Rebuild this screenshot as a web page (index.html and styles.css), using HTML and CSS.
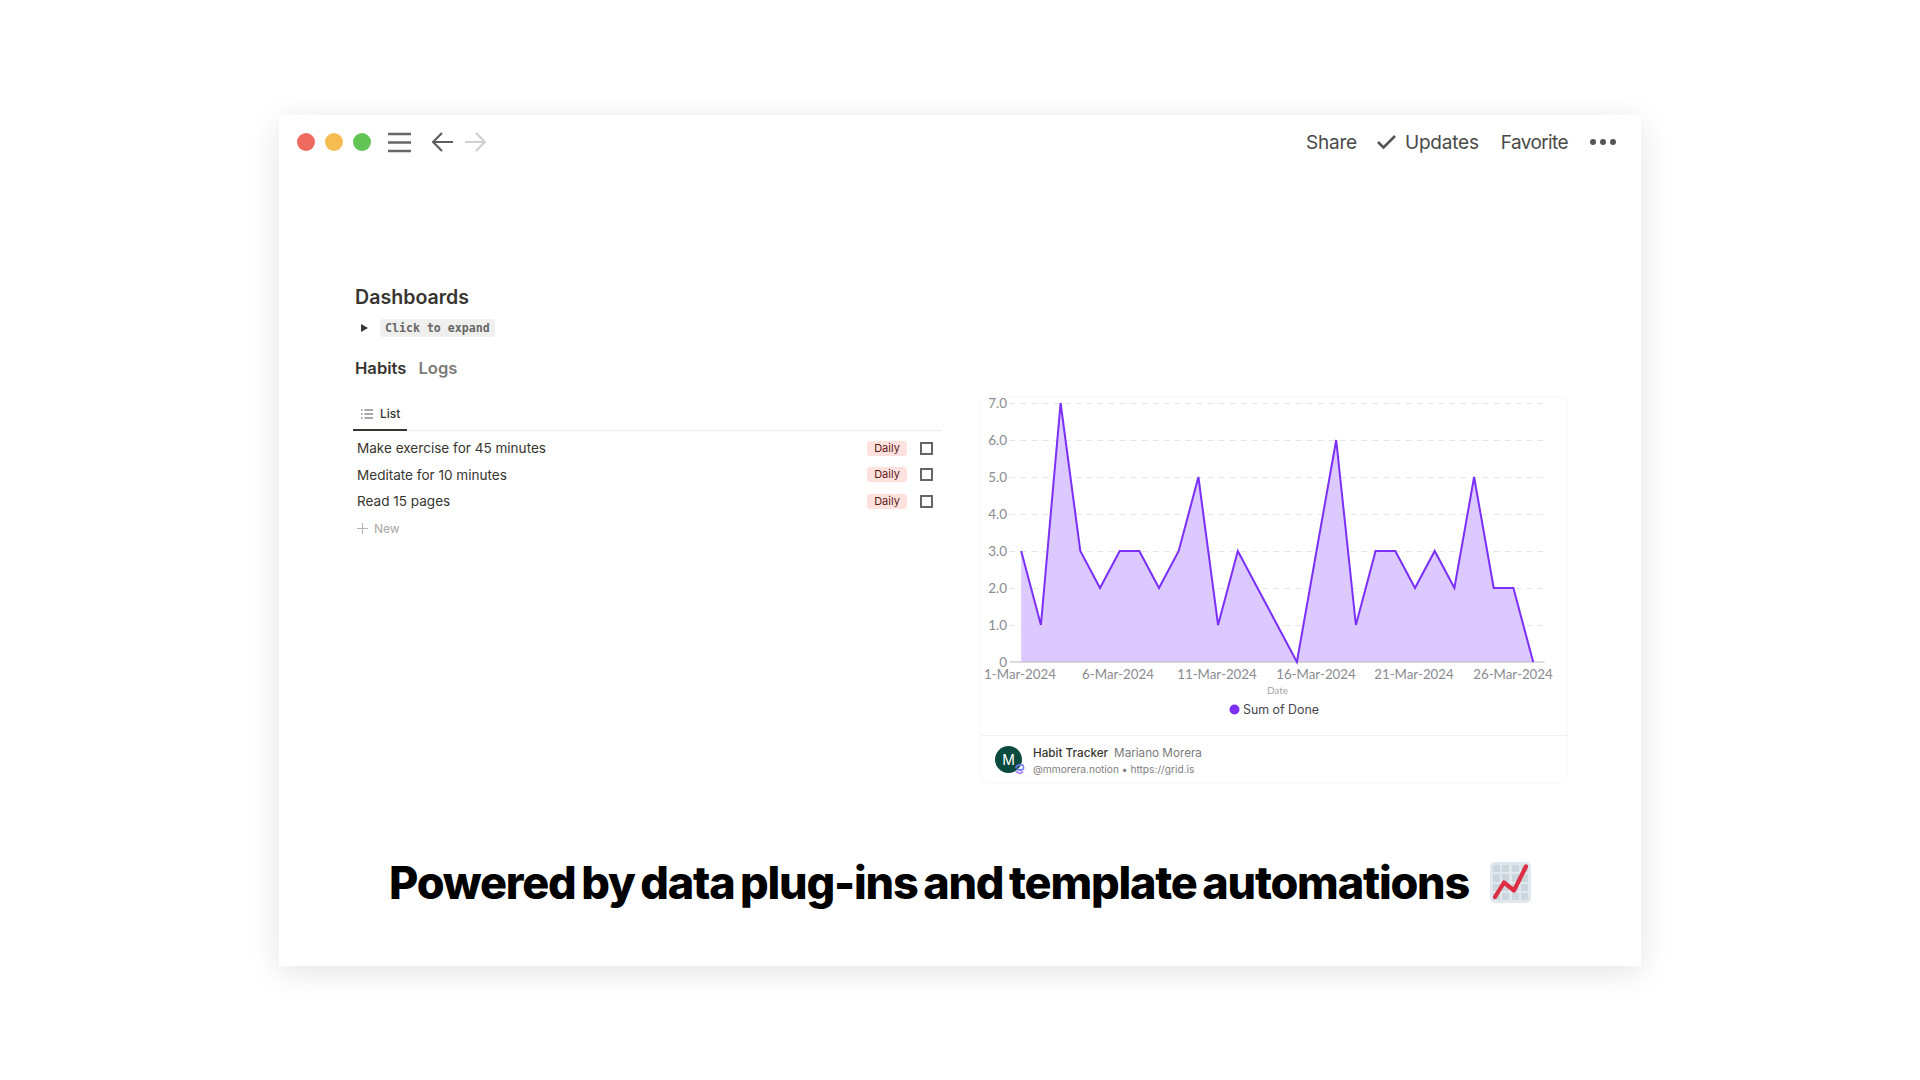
FILE: index.html
```html
<!DOCTYPE html>
<html lang="en">
<head>
<meta charset="utf-8">
<title>Habit Tracker</title>
<link rel="stylesheet" href="styles.css">
</head>
<body>
<main class="window">
  <header class="titlebar">
    <div class="bar-left">
      <span class="light red"></span><span class="light yellow"></span><span class="light green"></span>
      <svg class="burger" width="23" height="21" viewBox="0 0 23 21"><path d="M0 2h23M0 10.500h23M0 19h23" stroke="#666" stroke-width="2.400" fill="none"/></svg>
      <svg class="nav-back" width="21" height="20" viewBox="0 0 21 20"><path d="M21 10H1.500M10 1l-9 9 9 9" stroke="#5f5f5f" stroke-width="2.200" fill="none"/></svg>
      <svg class="nav-fwd" width="21" height="20" viewBox="0 0 21 20"><path d="M0 10h19.500M11 1l9 9-9 9" stroke="#cfcfcf" stroke-width="2.200" fill="none"/></svg>
    </div>
    <nav class="bar-right">
      <span class="act act-share">Share</span>
      <span class="act act-updates"><svg width="19" height="14" viewBox="0 0 19 14"><path d="M1 7l5.500 5.500L18 1" stroke="#555" stroke-width="2.600" fill="none"/></svg>Updates</span>
      <span class="act act-fav">Favorite</span>
      <svg class="dots" width="26" height="6" viewBox="0 0 26 6"><circle cx="3" cy="3" r="3"/><circle cx="13" cy="3" r="3"/><circle cx="23" cy="3" r="3"/></svg>
    </nav>
  </header>

  <section class="content">
    <div class="page-left">
      <h1 class="page-title">Dashboards</h1>
      <div class="toggle"><span class="triangle"></span><code class="code-pill">Click to expand</code></div>
      <div class="views"><span class="view active">Habits</span><span class="view">Logs</span></div>
      <div class="tabs"><div class="tab"><svg width="12" height="10" viewBox="0 0 12 10"><path d="M3.500 1H12M3.500 5H12M3.500 9H12M0 1h1.500M0 5h1.500M0 9h1.500" stroke="#555" stroke-width="1" fill="none"/></svg>List</div></div>
      <ul class="rows">
        <li class="row"><span class="row-name">Make exercise for 45 minutes</span><span class="tag">Daily</span><span class="check"></span></li>
        <li class="row"><span class="row-name">Meditate for 10 minutes</span><span class="tag">Daily</span><span class="check"></span></li>
        <li class="row"><span class="row-name">Read 15 pages</span><span class="tag">Daily</span><span class="check"></span></li>
        <li class="row row-new"><svg width="11" height="11" viewBox="0 0 11 11"><path d="M5.500 0v11M0 5.500h11" stroke="#b5b5b3" stroke-width="1.200"/></svg>New</li>
      </ul>
    </div>

    <article class="card">
      <svg class="chart" width="586" height="337" viewBox="981.500 398 586 337">
        <g class="grid">
          <path d="M1010 403.500H1545M1010 440.500H1545M1010 477.500H1545M1010 514.500H1545M1010 551.500H1545M1010 588.500H1545M1010 625.500H1545"/>
        </g>
        <polygon class="area" points="1021.700,662 1021.700,551 1041.400,625 1061.100,403 1080.800,551 1100.500,588 1120.200,551 1139.800,551 1159.500,588 1179.200,551 1198.900,477 1218.600,625 1238.300,551 1258,588 1277.700,625 1297.400,662 1317,551 1336.700,440 1356.400,625 1376.100,551 1395.800,551 1415.500,588 1435.200,551 1454.900,588 1474.600,477 1494.200,588 1513.900,588 1533.700,662"/>
        <path class="axis" d="M1010 662H1545"/>
        <polyline class="line" points="1021.700,551 1041.400,625 1061.100,403 1080.800,551 1100.500,588 1120.200,551 1139.800,551 1159.500,588 1179.200,551 1198.900,477 1218.600,625 1238.300,551 1258,588 1277.700,625 1297.400,662 1317,551 1336.700,440 1356.400,625 1376.100,551 1395.800,551 1415.500,588 1435.200,551 1454.900,588 1474.600,477 1494.200,588 1513.900,588 1533.700,662"/>
        <g class="ticks-y">
          <text x="1007.500" y="408">7.0</text><text x="1007.500" y="445">6.0</text><text x="1007.500" y="482">5.0</text><text x="1007.500" y="519">4.0</text><text x="1007.500" y="556">3.0</text><text x="1007.500" y="593">2.0</text><text x="1007.500" y="630">1.0</text><text x="1007.500" y="667">0</text>
        </g>
        <g class="ticks-x">
          <text x="1020.500" y="679">1-Mar-2024</text><text x="1118.500" y="679">6-Mar-2024</text><text x="1217.500" y="679">11-Mar-2024</text><text x="1316.500" y="679">16-Mar-2024</text><text x="1414.500" y="679">21-Mar-2024</text><text x="1513.500" y="679">26-Mar-2024</text>
        </g>
        <text class="axis-title" x="1278" y="694">Date</text>
        <circle class="legend-dot" cx="1235" cy="709.500" r="5"/>
        <text class="legend" x="1243.500" y="714">Sum of Done</text>
      </svg>
      <footer class="card-foot">
        <div class="avatar">M
          <svg class="avatar-badge" width="11" height="12" viewBox="0 0 11 12"><path d="M2 4.500C3 1.500 7 1 9 2.500M9.500 4.500C10 7 6 7.500 3.500 6.500" stroke="#6f7cf2" stroke-width="1.800" fill="none" stroke-linecap="round"/><path d="M2.500 8.500C4.500 10.500 7 10.500 8.500 9" stroke="#b48cf5" stroke-width="1.800" fill="none" stroke-linecap="round"/></svg>
        </div>
        <div class="foot-text">
          <div class="foot-line1"><span class="foot-name">Habit Tracker</span><span class="foot-author">Mariano Morera</span></div>
          <div class="foot-line2">@mmorera.notion • https://grid.is</div>
        </div>
      </footer>
    </article>
  </section>

  <h2 class="headline">Powered by data plug-ins and template automations
    <svg class="emoji" width="41" height="41" viewBox="0 0 41 41">
      <rect width="41" height="41" rx="5" fill="#e1e8ed"/>
      <g fill="#ccd6dd">
        <rect x="3" y="3" width="7" height="7"/><rect x="12" y="3" width="7" height="7"/><rect x="22" y="3" width="7" height="7"/><rect x="31" y="3" width="7" height="7"/>
        <rect x="3" y="12" width="7" height="8"/><rect x="12" y="12" width="7" height="8"/><rect x="22" y="12" width="7" height="8"/><rect x="31" y="12" width="7" height="8"/>
        <rect x="3" y="22" width="7" height="7"/><rect x="12" y="22" width="7" height="7"/><rect x="22" y="22" width="7" height="7"/><rect x="31" y="22" width="7" height="7"/>
        <rect x="3" y="31" width="7" height="7"/><rect x="12" y="31" width="7" height="7"/><rect x="22" y="31" width="7" height="7"/><rect x="31" y="31" width="7" height="7"/>
      </g>
      <path d="M5 35L14 20.500L24 28.500L36 4.500" stroke="#dd2e44" stroke-width="4.200" stroke-linecap="round" stroke-linejoin="round" fill="none"/>
    </svg>
  </h2>
</main>
</body>
</html>
```
FILE: styles.css
```css
* { box-sizing: border-box; }
html, body { margin: 0; height: 100%; }
body {
  background: #fff;
  font-family: "Inter", "Liberation Sans", sans-serif;
  color: #37352f;
  padding: 115px 279px 0 279px;
}
.window {
  width: 1362px;
  height: 851px;
  background: #fff;
  box-shadow: 0 6px 30px rgba(0,0,0,.11);
  display: flex;
  flex-direction: column;
}
.titlebar {
  height: 54px;
  padding: 0 25px 0 18px;
  display: flex;
  align-items: center;
  justify-content: space-between;
  flex: none;
}
.bar-left { display: flex; align-items: center; }
.light { width: 18px; height: 18px; border-radius: 50%; margin-right: 10px; }
.red { background: #ee6a5f; }
.yellow { background: #f5bd4f; }
.green { background: #61c454; }
.burger { margin-left: 7px; }
.nav-back { margin-left: 21px; }
.nav-fwd { margin-left: 12px; }
.bar-right { display: flex; align-items: center; color: #4a4a48; font-size: 19px; letter-spacing: -.2px; }
.act { margin-right: 22px; display: flex; align-items: center; }
.act-share { margin-right: 20px; }
.act-updates svg { margin-right: 9px; }
.act-fav { letter-spacing: -.6px; }
.dots { fill: #555; }

.content {
  flex: none;
  height: 671px;
  padding: 0 74px 0 76px;
  display: flex;
  justify-content: space-between;
  position: relative;
}
.page-left { width: 587px; padding-top: 115px; }
.page-title { margin: 0; font-size: 19.600px; line-height: 26px; font-weight: 600; color: #37352f; }
.toggle { display: flex; align-items: center; height: 18px; margin-top: 9px; }
.triangle {
  width: 0; height: 0; margin-left: 6px;
  border-left: 7px solid #37352f;
  border-top: 4.500px solid transparent;
  border-bottom: 4.500px solid transparent;
}
.code-pill {
  margin-left: 12px;
  background: #efefee;
  border-radius: 3px;
  color: #666;
  font-family: "DejaVu Sans Mono", "Liberation Mono", monospace;
  font-weight: 700;
  font-size: 11.600px;
  line-height: 18px;
  padding: 0 5px;
}
.views { display: flex; gap: 12px; font-size: 16.600px; line-height: 22px; font-weight: 600; margin-top: 20px; color: #7c7b78; }
.view.active { color: #37352f; }
.tabs { border-bottom: 1px solid #ececeb; margin: 19px 0 0 -2px; height: 33px; }
.tab {
  width: 54px; height: 33px;
  border-bottom: 2px solid #37352f;
  display: flex; align-items: center; gap: 7px;
  padding-left: 8px;
  font-size: 12px; font-weight: 500;
}
.rows { list-style: none; margin: 4px 0 0; padding: 0; }
.row { display: flex; align-items: center; height: 26.600px; padding-left: 2px; font-size: 13.550px; color: #37352f; }
.row-name { flex: 1; }
.tag {
  width: 40px; height: 15px; line-height: 15px;
  text-align: center;
  background: #ffe2dd; color: #5d1715;
  border-radius: 3px; font-size: 11px;
}
.check { width: 13px; height: 13px; border: 2px solid #666; margin: 0 9px 0 13px; }
.row-new { color: #a8a7a4; font-size: 12px; gap: 6px; }

.card {
  width: 586px;
  height: 385px;
  margin-top: 229px;
  background: #fff;
  border-radius: 6px;
  box-shadow: 0 0 2px rgba(0,0,0,.09);
}
.chart { display: block; overflow: visible; }
.grid path { stroke: #e6e6e6; stroke-width: 1.200; stroke-dasharray: 6 5; fill: none; }
.axis { stroke: #bcb8c2; stroke-width: 1.200; fill: none; }
.area { fill: #dcc9ff; }
.line { fill: none; stroke: #7b2ff7; stroke-width: 2; stroke-linejoin: miter; }
.chart text { font-family: "Lato", "Open Sans", sans-serif; }
.ticks-y text { font-size: 13.500px; fill: #8b8b90; text-anchor: end; }
.ticks-x text { font-size: 13.300px; fill: #8b8b90; text-anchor: middle; }
.axis-title { font-size: 10px; fill: #a5a5a8; text-anchor: middle; }
.legend-dot { fill: #7b2ff7; }
.chart .legend { font-family: "Inter", sans-serif; font-size: 12.400px; fill: #45454d; }

.card-foot {
  height: 48px;
  border-top: 1px solid #f1f1f1;
  display: flex;
  align-items: center;
  padding-left: 14px;
  gap: 11px;
}
.avatar {
  width: 27px; height: 27px; border-radius: 50%;
  background: #0b4a3f; color: #fff;
  display: flex; align-items: center; justify-content: center;
  font-size: 14px; position: relative;
}
.avatar-badge { position: absolute; right: -3px; bottom: -2px; }
.foot-text { margin-top: 2px; }
.foot-line1 { font-size: 11.700px; line-height: 16px; color: #7a7a7a; display: flex; gap: 6px; }
.foot-name { color: #37352f; font-weight: 500; }
.foot-line2 { font-size: 10.200px; line-height: 14px; color: #808080; margin-top: 1px; }

.headline {
  margin: 0;
  height: 126px;
  padding: 16px 0 0 110px;
  font-size: 45px;
  line-height: 54px;
  font-weight: 800;
  letter-spacing: -1.200px;
  word-spacing: -3px;
  color: #000;
  display: flex;
  align-items: flex-start;
  white-space: nowrap;
}
.emoji { margin: 6px 0 0 21px; flex: none; }
```
